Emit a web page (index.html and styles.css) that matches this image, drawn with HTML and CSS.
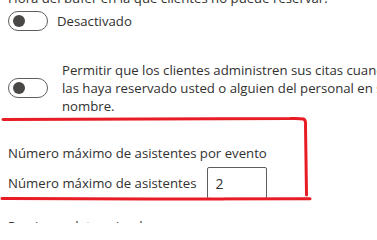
FILE: index.html
```html
<!DOCTYPE html>
<html lang="es">
<head>
<meta charset="utf-8">
<link rel="stylesheet" href="styles.css">
</head>
<body>
<div class="page">
  <p class="intro">Hora del búfer en la que clientes no puede reservar.</p>
  <div class="toggle-row first">
    <span class="toggle"><span class="thumb"></span></span>
    <span class="toggle-label">Desactivado</span>
  </div>
  <div class="toggle-row second">
    <span class="toggle"><span class="thumb"></span></span>
    <span class="toggle-text">Permitir que los clientes administren sus citas cuando las haya reservado usted o alguien del personal en su nombre.</span>
  </div>
  <div class="attendees">
    <div class="section-title">Número máximo de asistentes por evento</div>
    <div class="field-row">
      <label class="field-label" for="max">Número máximo de asistentes</label>
      <input class="field-input" id="max" type="text" value="2">
    </div>
  </div>
  <div class="next-title">Precio predeterminado</div>
  <svg class="annotation" width="377" height="223" viewBox="0 0 377 223">
    <path d="M3 130.5 L290 129.5 Q300 129.2 303.5 130 Q306 131 305.5 137 L306 170 L306.5 206" />
    <path d="M2 209.5 L150 210 L310 209.8" />
  </svg>
</div>
</body>
</html>
```
FILE: styles.css
```css
html, body {
  margin: 0;
  padding: 0;
  overflow: hidden;
  background: #ffffff;
}
body {
  width: 377px;
  height: 223px;
  font-family: "Open Sans", "Noto Sans", sans-serif;
  font-size: 13.2px;
  color: #323130;
}
.page {
  position: relative;
  width: 460px;
  padding-left: 8px;
  box-sizing: border-box;
}
.intro {
  margin: -11px 0 0 0;
  line-height: 18px;
  white-space: nowrap;
}
.toggle-row {
  display: flex;
  align-items: center;
}
.toggle-row.first {
  margin-top: 4px;
  gap: 9px;
}
.toggle-row.second {
  margin-top: 30px;
  gap: 14px;
}
.toggle {
  flex: none;
  box-sizing: border-box;
  width: 40px;
  height: 20px;
  border: 1px solid #605e5c;
  border-radius: 10px;
  display: flex;
  align-items: center;
  padding: 0 4px;
}
.thumb {
  width: 12px;
  height: 12px;
  border-radius: 50%;
  background: #4a4846;
}
.toggle-label {
  line-height: 20px;
}
.toggle-text {
  line-height: 18px;
  width: 340px;
}
.attendees {
  margin-top: 29px;
}
.section-title {
  line-height: 18px;
}
.field-row {
  display: flex;
  align-items: center;
  gap: 11px;
  margin-top: 5px;
}
.field-label {
  line-height: 18px;
}
.field-input {
  box-sizing: border-box;
  width: 60px;
  height: 32px;
  border: 1px solid #605e5c;
  border-radius: 2px;
  padding: 0 7px;
  font-family: inherit;
  font-size: 14px;
  color: #323130;
  outline: none;
}
.next-title {
  margin-top: 18px;
  line-height: 18px;
}
.annotation {
  position: absolute;
  left: 0;
  top: 0;
  fill: none;
  stroke: #e81c24;
  stroke-width: 3;
  stroke-linecap: round;
  stroke-linejoin: round;
}
```
